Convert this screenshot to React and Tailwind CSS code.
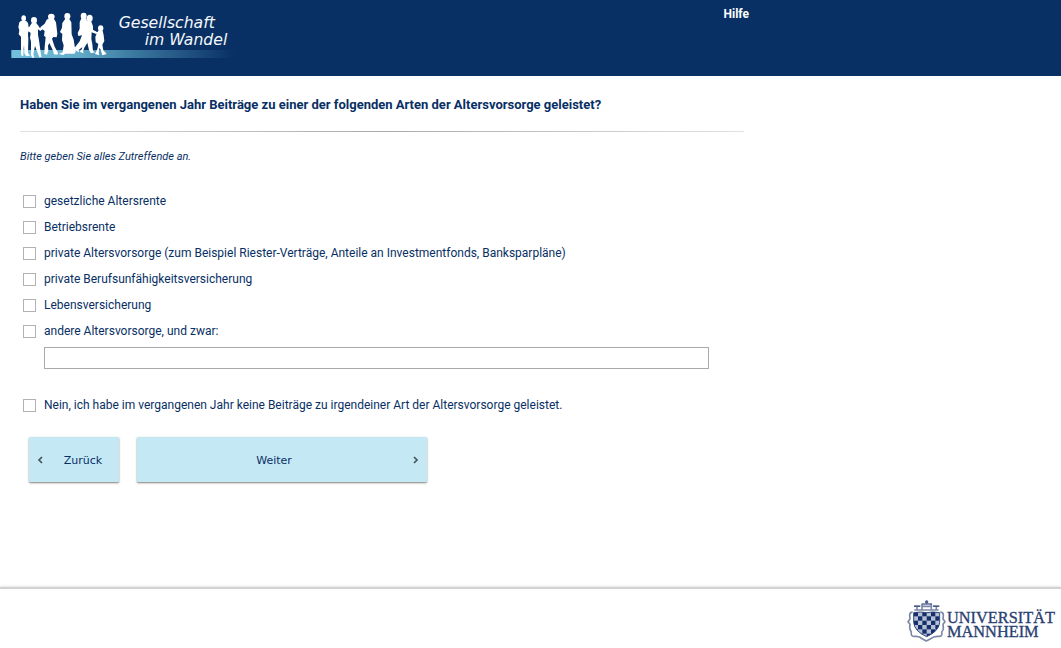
import React from "react";

const options = [
  "gesetzliche Altersrente",
  "Betriebsrente",
  "private Altersvorsorge (zum Beispiel Riester-Verträge, Anteile an Investmentfonds, Banksparpläne)",
  "private Berufsunfähigkeitsversicherung",
  "Lebensversicherung",
  "andere Altersvorsorge, und zwar:",
];

function SurveyLogo() {
  return (
    <svg viewBox="0 0 675 165" className="block h-[55px] w-[225px]" role="img" aria-label="Gesellschaft im Wandel">
      <defs>
        <linearGradient id="band" x1="0" x2="1">
          <stop offset="0" stopColor="#72c2dc" />
          <stop offset="0.3" stopColor="#62abc9" />
          <stop offset="0.55" stopColor="#3b789f" />
          <stop offset="1" stopColor="#092f66" />
        </linearGradient>
      </defs>
      <rect x="1" y="126" width="671" height="24" fill="url(#band)" />
      <g transform="translate(-33 -24)" fill="#fff">
        <ellipse cx="71" cy="55" rx="7" ry="9" />
        <path d="M64 62 L78 62 84 69 86 82 93 89 92 95 85 94 84 103 85 118 84 159 91 167 78 168 73 160 72 134 70 160 70 167 65 168 63 160 63 110 56 103 58 90 55 82 58 67Z" />
        <ellipse cx="102" cy="61" rx="9" ry="10" />
        <path d="M96 68 L108 68 114 76 121 86 130 77 129 86 121 93 114 88 114 104 117 121 123 164 125 170 118 172 105 138 100 163 103 172 97 174 93 165 93 125 90 113 92 99 84 93 84 86 91 76Z" />
        <ellipse cx="154" cy="50" rx="10" ry="9" />
        <path d="M145 56 L162 57 168 67 172 101 170 112 160 111 156 116 164 140 174 159 172 164 161 163 160 154 148 129 144 137 145 151 141 164 133 162 134 141 137 111 132 107 134 93 127 88 121 90 121 82 134 71 140 59Z" />
        <ellipse cx="202" cy="49" rx="9" ry="10" />
        <path d="M196 56 L208 57 214 67 215 103 221 119 227 156 223 161 196 161 190 165 176 162 188 157 191 136 186 121 187 102 180 96 186 83 187 69Z" />
        <ellipse cx="251" cy="48" rx="9" ry="10" />
        <path d="M244 55 L259 55 262 65 260 104 266 118 256 134 236 150 237 157 224 150 224 143 239 124 246 106 235 108 233 99 239 86 239 67Z" />
        <ellipse cx="269" cy="55" rx="9" ry="11" />
        <path d="M261 62 L274 65 279 79 279 90 291 97 289 102 275 97 274 117 277 132 279 153 286 157 273 160 267 150 262 128 253 143 249 154 251 160 239 155 246 146 250 113 249 105 256 91 257 72Z" />
        <ellipse cx="302" cy="85" rx="8" ry="9" />
        <path d="M296 91 L308 92 311 106 313 123 307 134 310 151 320 162 307 166 302 150 299 143 296 157 298 166 285 162 292 147 295 132 287 126 286 110 290 101 274 93 277 89 292 97Z" />
      </g>
      <g fill="#f4f7fa" fontFamily='"DejaVu Sans", sans-serif' fontStyle="italic" fontSize="47">
        <text x="323" y="59">Gesellschaft</text>
        <text x="401" y="111">im Wandel</text>
      </g>
    </svg>
  );
}

function UniversityLogo() {
  return (
    <svg viewBox="0 0 483 132" className="block h-[44px] w-[161px]" role="img" aria-label="Universität Mannheim">
      <defs>
        <clipPath id="shield">
          <path d="M41 38 Q62 34 80 38 Q98 34 119 38 V68 Q116 94 80 110 Q44 94 41 68Z" />
        </clipPath>
      </defs>
      <g fill="none" stroke="#7c88a7" strokeWidth="5" strokeLinejoin="round">
        <path d="M38 36 Q29 36 29 46 L30 57 24 65 30 73 29 82 Q29 90 34 96 Q31 111 45 109 Q59 108 66 116 L79 123 92 116 Q102 108 115 109 Q129 110 125 96 Q131 90 130 82 L129 73 135 65 129 57 130 46 Q130 36 121 36" />
        <path d="M66 32 V12 M94 32 V12 M66 19 H94 M51 20 V30 M109 30 V20 M43 30 H116" />
      </g>
      <g fill="#4c5c88">
        <rect x="42" y="16" width="19" height="5" />
        <rect x="99" y="16" width="19" height="5" />
        <circle cx="80" cy="6" r="5" />
        <rect x="65" y="10" width="31" height="4" />
      </g>
      <g clipPath="url(#shield)">
        <rect x="38" y="34" width="84" height="78" fill="#b5bfd6" />
        {[0, 1, 2, 3, 4, 5].flatMap((row) =>
          [0, 1, 2, 3, 4, 5].map((column) =>
            (row + column) % 2 === 0 ? (
              <rect key={`${row}-${column}`} x={41 + column * 13} y={36 + row * 13} width="13" height="13" fill="#152f6b" />
            ) : null
          )
        )}
      </g>
      <path d="M41 38 Q62 34 80 38 Q98 34 119 38 V68 Q116 94 80 110 Q44 94 41 68Z" fill="none" stroke="#304679" strokeWidth="3" />
      <g fill="#2a3f72" stroke="#2a3f72" strokeWidth="1" fontFamily='"Liberation Serif", serif' fontSize="49">
        <text x="141" y="70">UNIVERSITÄT</text>
        <text x="141" y="111">MANNHEIM</text>
      </g>
    </svg>
  );
}

const boxClass = "m-0 size-[13px] shrink-0 appearance-none border border-[#b2b2b2] bg-white checked:bg-[#082f64]";
const buttonClass = "flex h-[45px] items-center bg-[#c5e9f4] px-2 shadow-[0_1px_2px_rgba(0,0,0,0.5)] rounded-[1px] font-['DejaVu_Sans',sans-serif] text-[11px] text-[#082f64]";

function Chevron({ right }) {
  return (
    <svg viewBox="0 0 8 8" className="size-2 shrink-0" fill="none" stroke="#46545c" strokeWidth="1.7" aria-hidden="true">
      <path d={right ? "M3 1 L6 4 L3 7" : "M5 1 L2 4 L5 7"} />
    </svg>
  );
}

export default function App() {
  return (
    <div className="flex min-h-screen flex-col bg-white font-['Roboto',sans-serif] text-xs text-[#082f64]">
      <header className="h-[76px] bg-[#083064]">
        <div className="flex max-w-[749px] items-start justify-between pt-2 pl-[11px]">
          <SurveyLogo />
          <a href="#hilfe" className="text-xs leading-3 font-bold text-white">Hilfe</a>
        </div>
      </header>

      <main className="w-full max-w-[764px] flex-1 px-5 pt-5">
        <h1 className="text-[13px] leading-[18px] font-bold">
          Haben Sie im vergangenen Jahr Beiträge zu einer der folgenden Arten der Altersvorsorge geleistet?
        </h1>
        <div className="mt-[17px] h-px bg-linear-to-r from-[#e2e2e2] via-[#aaaaaa] to-[#e2e2e2]" />
        <p className="mt-[17px] text-[11px] leading-4 italic">Bitte geben Sie alles Zutreffende an.</p>

        <form className="mt-[23px]" onSubmit={(event) => event.preventDefault()}>
          <div className="pl-[3px]">
            {options.map((option, index) => (
              <div key={option} className="flex h-[26px] items-center gap-2">
                <input type="checkbox" id={`option-${index}`} className={boxClass} />
                <label htmlFor={`option-${index}`}>{option}</label>
              </div>
            ))}
            <div className="mt-[3px] pr-[35px] pl-[21px]">
              <input type="text" aria-label="andere Altersvorsorge" className="block h-[22px] w-full border border-[#aaaaaa] px-1" />
            </div>
            <div className="mt-[23px] flex h-[26px] items-center gap-2">
              <input type="checkbox" id="option-none" className={boxClass} />
              <label htmlFor="option-none">
                Nein, ich habe im vergangenen Jahr keine Beiträge zu irgendeiner Art der Altersvorsorge geleistet.
              </label>
            </div>
          </div>

          <div className="mt-[19px] flex gap-[18px] pl-[9px]">
            <button type="button" className={`${buttonClass} w-[90px]`}>
              <Chevron />
              <span className="flex-1 pt-[3px] pl-[10px]">Zurück</span>
            </button>
            <button type="submit" className={`${buttonClass} w-[290px]`}>
              <span className="flex-1 pt-[3px] pr-2 text-center">Weiter</span>
              <Chevron right />
            </button>
          </div>
        </form>
      </main>

      <footer className="flex h-[61px] shrink-0 justify-end border-t-2 border-[#d2d2d2] pt-[11px] shadow-[0_0_3px_rgba(0,0,0,0.2)]">
        <UniversityLogo />
      </footer>
    </div>
  );
}
